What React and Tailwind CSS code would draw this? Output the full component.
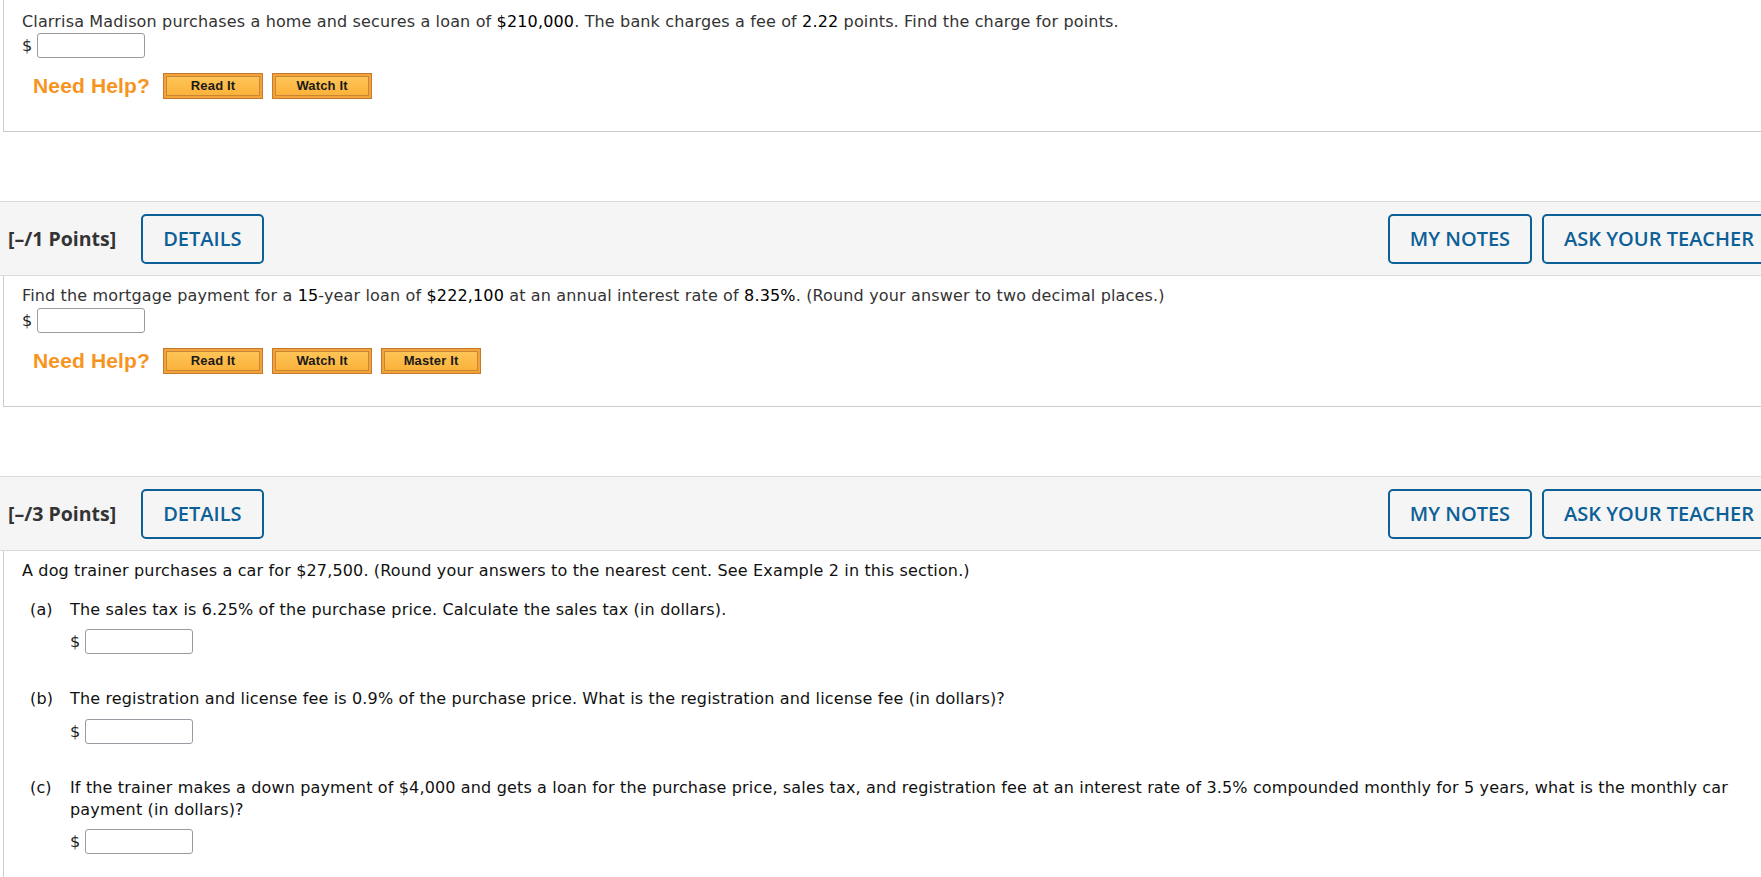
const BODY_FONT = { fontFamily: '"DejaVu Sans", Verdana, sans-serif' };

function AnswerBox() {
  return (
    <div className="flex h-[25px] items-center gap-[5px]">
      <span className="text-[16px] leading-[22px] text-[#222]">$</span>
      <span className="block h-[25px] w-[108px] rounded-[3px] border border-[#9a9aa2] bg-white" />
    </div>
  );
}

function HelpButton({ children }) {
  return (
    <span className="flex h-[26px] w-[100px] border border-[#c47a2c] bg-[#f4a23a] p-[2px]">
      <span
        className="flex flex-1 items-center justify-center border border-[#c98636] bg-gradient-to-b from-[#fec556] to-[#fbb23a] text-[13px] font-bold text-[#1a1a1a]"
        style={{ fontFamily: '"Liberation Sans", Arial, sans-serif' }}
      >
        {children}
      </span>
    </span>
  );
}

function NeedHelp({ master }) {
  return (
    <div className="mt-[15px] flex h-[26px] items-center">
      <span
        className="ml-[11px] mr-[13px] text-[21px] font-bold text-[#f7941e]"
        style={{ fontFamily: '"Liberation Sans", Arial, sans-serif' }}
      >
        Need Help?
      </span>
      <div className="flex gap-[9px]">
        <HelpButton>Read It</HelpButton>
        <HelpButton>Watch It</HelpButton>
        {master && <HelpButton>Master It</HelpButton>}
      </div>
    </div>
  );
}

function OutlineButton({ children }) {
  return (
    <span className="flex h-[50px] items-center rounded-[5px] border-2 border-[#0d6097] px-[20px] text-[20px] font-semibold text-[#0d6097]">
      {children}
    </span>
  );
}

function Header({ points }) {
  return (
    <div
      className="flex h-[75px] items-center border-y border-[#dadada] bg-[#f5f5f5] pl-[8px] pr-[10px]"
      style={{ fontFamily: '"Open Sans", sans-serif' }}
    >
      <span className="mr-[25px] text-[19.5px] font-bold text-[#333]">[–/{points} Points]</span>
      <OutlineButton>DETAILS</OutlineButton>
      <div className="ml-auto flex gap-[10px]">
        <OutlineButton>MY NOTES</OutlineButton>
        <OutlineButton>ASK YOUR TEACHER</OutlineButton>
      </div>
    </div>
  );
}

function Part({ label, children, className }) {
  return (
    <div className={className}>
      <div className="flex text-[16px] leading-[22px] text-[#111]">
        <span className="w-[48px] shrink-0 pl-[8px]">{label}</span>
        <p className="pr-[10px]">{children}</p>
      </div>
    </div>
  );
}

export default function App() {
  return (
    <div className="h-[877px] w-full overflow-hidden bg-white tracking-[0.15px]" style={BODY_FONT}>
      <div className="w-[1786px]">
        {/* question 1 */}
        <div className="ml-[3px] border-b border-l border-[#cccccc] pb-[32px] pl-[18px] pt-[11px]">
          <p className="text-[16px] leading-[22px] text-[#333]">
            Clarrisa Madison purchases a home and secures a loan of{" "}
            <span className="text-black">$210,000</span>. The bank charges a fee of{" "}
            <span className="text-black">2.22</span> points. Find the charge for points.
          </p>
          <AnswerBox />
          <NeedHelp />
        </div>

        {/* question 2 */}
        <div className="mt-[69px] tracking-normal">
          <Header points="1" />
        </div>
        <div className="ml-[3px] border-b border-l border-[#cccccc] pb-[32px] pl-[18px] pt-[9px]">
          <p className="text-[16px] leading-[22px] text-[#333]">
            Find the mortgage payment for a <span className="text-black">15</span>-year loan of{" "}
            <span className="text-black">$222,100</span> at an annual interest rate of{" "}
            <span className="text-black">8.35%</span>. (Round your answer to two decimal places.)
          </p>
          <div className="mt-[1px]">
            <AnswerBox />
          </div>
          <NeedHelp master />
        </div>

        {/* question 3 */}
        <div className="mt-[69px] tracking-normal">
          <Header points="3" />
        </div>
        <div className="ml-[3px] h-[400px] border-l border-[#cccccc] pl-[18px] pt-[9px]">
          <p className="text-[16px] leading-[22px] text-[#111]">
            A dog trainer purchases a car for $27,500. (Round your answers to the nearest cent. See Example 2 in this section.)
          </p>

          <Part label="(a)" className="mt-[17px]">
            The sales tax is 6.25% of the purchase price. Calculate the sales tax (in dollars).
          </Part>
          <div className="ml-[48px] mt-[8px]">
            <AnswerBox />
          </div>

          <Part label="(b)" className="mt-[34px]">
            The registration and license fee is 0.9% of the purchase price. What is the registration and license fee (in dollars)?
          </Part>
          <div className="ml-[48px] mt-[9px]">
            <AnswerBox />
          </div>

          <Part label="(c)" className="mt-[33px]">
            If the trainer makes a down payment of $4,000 and gets a loan for the purchase price, sales tax, and registration fee at an interest rate of 3.5% compounded monthly for 5 years, what is the monthly car payment (in dollars)?
          </Part>
          <div className="ml-[48px] mt-[8px]">
            <AnswerBox />
          </div>
        </div>
      </div>
    </div>
  );
}
